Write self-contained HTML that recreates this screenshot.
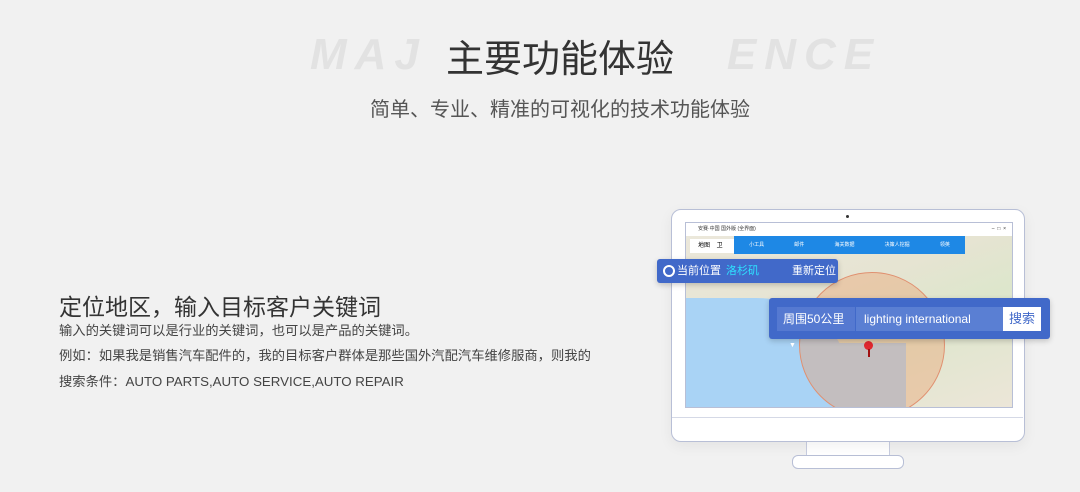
<!DOCTYPE html>
<html><head><meta charset="utf-8"><style>
body{margin:0;width:1080px;height:492px;background:#f1f1f1;font-family:"Liberation Sans","Noto Sans CJK SC",sans-serif;position:relative;overflow:hidden}
.a{position:absolute}
.wm{left:310px;top:30px;font-size:44px;font-style:italic;font-weight:bold;letter-spacing:8px;color:#e2e2e2;font-family:"Liberation Sans",sans-serif;white-space:nowrap}
.map{background:linear-gradient(160deg,#ece8dc 0%,#e6e4d2 40%,#dde6cc 60%,#ece6d8 100%)}
</style></head><body>
<div class="a wm">MAJ<span style="display:inline-block;width:300px"></span>ENCE</div>
<div class="a" style="left:0;width:1120px;top:28px;text-align:center;font-size:38px;color:#333">主要功能体验</div>
<div class="a" style="left:0;width:1120px;top:93px;text-align:center;font-size:20px;color:#555">简单、专业、精准的可视化的技术功能体验</div>
<div class="a" style="left:59px;top:288px;font-size:23px;color:#333">定位地区，输入目标客户关键词</div>
<div class="a" style="left:59px;top:320px;font-size:13.3px;color:#444">输入的关键词可以是行业的关键词，也可以是产品的关键词。</div>
<div class="a" style="left:59px;top:345px;font-size:13.3px;color:#444">例如：如果我是销售汽车配件的，我的目标客户群体是那些国外汽配汽车维修服商，则我的</div>
<div class="a" style="left:59px;top:371px;font-size:13.3px;color:#444">搜索条件：AUTO PARTS,AUTO SERVICE,AUTO REPAIR</div>
<!-- monitor -->
<div class="a" style="left:806px;top:440px;width:82px;height:20px;background:#fff;border-left:1px solid #c8cde0;border-right:1px solid #c8cde0"></div>
<div class="a" style="left:792px;top:455px;width:110px;height:12px;background:#fff;border:1px solid #b8bfd6;border-radius:6px"></div>
<div class="a" style="left:671px;top:209px;width:352px;height:231px;background:#fff;border:1px solid #b8bfd6;border-radius:10px;box-shadow:0 4px 14px rgba(0,0,0,.06)"></div>
<div class="a" style="left:846px;top:215px;width:3px;height:3px;background:#333;border-radius:50%"></div>
<div class="a" style="left:672px;top:417px;width:351px;height:1px;background:#d5d9e6"></div>
<div class="a map" style="left:685px;top:222px;width:326px;height:184px;border:1px solid #b8bfd6;overflow:hidden">
 <div class="a" style="left:-40px;top:75px;width:200px;height:160px;background:#a9d3f5;border-radius:0 45% 0 0"></div>
 <div class="a" style="left:100px;top:120px;width:120px;height:70px;background:#a9d3f5"></div>
 <div class="a" style="left:113px;top:49px;width:144px;height:144px;border-radius:50%;background:rgba(235,160,110,.4);border:1px solid #e09070"></div>
 <div class="a" style="left:0;top:0;width:326px;height:13px;background:#fff;font-size:5px;color:#333;line-height:13px;padding-left:12px;box-sizing:border-box">安赛·中国 国外版 (全界面)<span style="float:right;padding-right:6px">–&nbsp;&nbsp;□&nbsp;&nbsp;×</span></div>
 <div class="a" style="left:4px;top:16px;width:44px;height:14px;background:#fff;font-size:6px;line-height:14px;padding-left:8px">地图&nbsp;&nbsp;&nbsp;&nbsp;卫</div>
 <div class="a" style="left:48px;top:13px;width:231px;height:18px;background:#1e88e5;color:#fff;font-size:5px;line-height:18px;display:flex;justify-content:space-around"><span>小工具</span><span>邮件</span><span>海关数据</span><span>决策人挖掘</span><span>领英</span></div>
 <div class="a" style="left:178px;top:118px;width:9px;height:9px;border-radius:50%;background:#e0282e"></div>
 <div class="a" style="left:182px;top:126px;width:2px;height:8px;background:#a01010"></div>
</div>
<div class="a" style="left:657px;top:259px;width:181px;height:24px;background:#4169c9;border-radius:3px;color:#fff;font-size:11px;line-height:24px;box-shadow:0 2px 6px rgba(0,0,0,.2)">
 <span class="a" style="left:6px;top:6px;width:8px;height:8px;border:2px solid #fff;border-radius:50%"></span>
 <span class="a" style="left:20px;top:0">当前位置</span><span class="a" style="left:69px;top:0;color:#2ee0ff">洛杉矶</span><span class="a" style="left:135px;top:0">重新定位</span></div>
<div class="a" style="left:769px;top:298px;width:281px;height:41px;background:#4169c9;border-radius:3px;box-shadow:0 2px 6px rgba(0,0,0,.2)">
 <div class="a" style="left:8px;top:9px;width:78px;height:24px;background:#5579d1;color:#fff;font-size:12px;line-height:24px;padding-left:6px;box-sizing:border-box">周围50公里 <span style="font-size:7px;margin-left:6px">▼</span></div>
 <div class="a" style="left:87px;top:9px;width:147px;height:24px;background:#5a7fd3;color:#fff;font-size:12px;line-height:24px;padding-left:8px;box-sizing:border-box">lighting international</div>
 <div class="a" style="left:234px;top:9px;width:38px;height:24px;background:#fff;color:#4169c9;font-size:13px;line-height:24px;text-align:center">搜索</div>
</div>
</body></html>
